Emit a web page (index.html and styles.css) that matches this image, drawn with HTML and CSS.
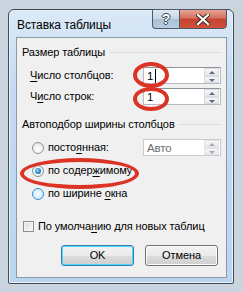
FILE: index.html
```html
<!DOCTYPE html>
<html lang="ru">
<head>
<meta charset="utf-8">
<title>Вставка таблицы</title>
<link rel="stylesheet" href="styles.css">
</head>
<body>
<div class="window">
  <div class="titlebar">
    <span class="title">Вставка таблицы</span>
    <div class="caption-buttons">
      <div class="cap-btn help">?</div>
      <div class="cap-btn close">
        <svg width="14" height="11" viewBox="0 0 14 11"><path d="M2 1 L12 10 M12 1 L2 10" stroke="#3a2020" stroke-width="4" stroke-linecap="square"/><path d="M2 1 L12 10 M12 1 L2 10" stroke="#fff" stroke-width="2.2" stroke-linecap="square"/></svg>
      </div>
    </div>
  </div>
  <div class="client">
    <div class="group-title"><span>Размер таблицы</span><i class="rule"></i></div>
    <div class="row row1">
      <span class="lbl"><u>Ч</u>исло столбцов:</span>
      <div class="spin"><span class="val">1<i class="caret"></i></span><div class="arrows"><b class="up"></b><b class="down"></b></div></div>
    </div>
    <div class="row row2">
      <span class="lbl">Ч<u>и</u>сло строк:</span>
      <div class="spin"><span class="val">1</span><div class="arrows"><b class="up"></b><b class="down"></b></div></div>
    </div>
    <div class="group-title g2"><span>Автоподбор ширины столбцов</span><i class="rule"></i></div>
    <div class="opt opt1">
      <span class="radio"></span><span class="otext">посто<u>я</u>нная:</span>
      <div class="spin auto"><span class="val">Авто</span><div class="arrows"><b class="up"></b><b class="down"></b></div></div>
    </div>
    <div class="opt opt2"><span class="radio checked"></span><span class="otext">по содер<u>ж</u>имому</span></div>
    <div class="opt opt3"><span class="radio hover"></span><span class="otext">по ширине <u>о</u>кна</span></div>
    <div class="opt check"><span class="box"></span><span class="otext">По умолча<u>н</u>ию для новых таблиц</span></div>
    <div class="buttons">
      <div class="btn default">OK</div>
      <div class="btn">Отмена</div>
    </div>
    <i class="mark m1"></i>
    <i class="mark m2"></i>
    <i class="mark m3"></i>
  </div>
</div>
</body>
</html>
```
FILE: styles.css
```css
* { box-sizing: border-box; }
html, body { margin: 0; padding: 0; }
body {
  width: 243px; height: 292px; overflow: hidden;
  background: #c9d4de;
  font-family: "Liberation Sans", Arial, sans-serif;
  font-size: 11px;
  line-height: 15px;
  letter-spacing: -0.1px;
  color: #000;
  padding: 9px 9px 0 8px;
}
.window {
  width: 226px; height: 275px;
  border: 1px solid #3f4a55;
  border-radius: 6px 6px 2px 2px;
  background: linear-gradient(180deg, #dbe9f7 0%, #c3daf1 30%, #bcd5ef 100%);
  padding: 0 6px 5px 7px;
  display: flex; flex-direction: column;
  box-shadow: inset 0 0 0 1px #e8f2fb;
}
.titlebar {
  height: 27px; flex: none;
  display: flex; justify-content: space-between; align-items: flex-start;
}
.title { padding: 8px 0 0 1px; line-height: 15px; font-size: 12px; }
.caption-buttons { display: flex; margin-top: -1px; }
.cap-btn {
  height: 20px; border: 1px solid #4c5966;
  display: flex; align-items: center; justify-content: center;
}
.help {
  width: 27px; border-radius: 0 0 0 4px; border-right: none;
  background: linear-gradient(180deg, #dfe9f3 0%, #c6d6e6 50%, #aabfd4 51%, #b8cde0 100%);
  color: #fff; font-weight: bold; font-size: 14px;
  text-shadow: 1px 0 0 #354555, -1px 0 0 #354555, 0 1px 0 #354555, 0 -1px 0 #354555;
}
.close {
  width: 48px; border-radius: 0 0 4px 0;
  background: linear-gradient(180deg, #e7a394 0%, #d5705e 45%, #c44430 50%, #d0503a 100%);
}
.client {
  position: relative;
  flex: 1;
  border: 1px solid #8a99a8;
  background: #f0f0f0;
  padding: 0 5px;
  display: flex; flex-direction: column;
  white-space: nowrap;
}
.group-title { display: flex; align-items: center; height: 16px; margin-top: 6px; flex: none; }
.group-title span { padding-right: 4px; }
.group-title .rule { flex: 1; height: 1px; background: #d5dfe5; margin-top: 1px; }
.group-title.g2 { margin-top: 11px; }
.row { display: flex; align-items: center; justify-content: space-between; padding-left: 8px; height: 17px; flex: none; }
.row1 { margin-top: 7px; }
.row2 { margin-top: 4px; }
u { text-decoration: underline; text-underline-offset: 2px; }
.spin {
  width: 78px; height: 17px;
  border: 1px solid #b7bcc4; border-top-color: #8e949c;
  background: #fff;
  display: flex; align-items: center; justify-content: space-between;
  padding: 0 1px 0 3px;
  font-size: 11.5px;
}
.val { position: relative; line-height: 14px; }
.caret { position: absolute; left: 8px; top: 0; width: 1px; height: 14px; background: #000; }
.arrows { display: flex; flex-direction: column; width: 15px; height: 15px; }
.arrows b {
  flex: 1; display: block; position: relative;
  border: 1px solid #d9dde3;
  background: linear-gradient(180deg, #f6f6f6, #e6e8ec);
}
.arrows b::after {
  content: ""; position: absolute; left: 4px; width: 0; height: 0;
  border-left: 3px solid transparent; border-right: 3px solid transparent;
}
.arrows .up::after { top: 2px; border-bottom: 3px solid #5a6a80; }
.arrows .down::after { top: 2px; border-top: 3px solid #5a6a80; }
.opt { display: flex; align-items: center; height: 17px; padding-left: 10px; flex: none; }
.opt1 { margin-top: 7px; }
.opt2 { margin-top: 6px; }
.opt3 { margin-top: 6px; }
.radio {
  width: 12px; height: 12px; border-radius: 50%;
  border: 1px solid #8d949c;
  background: radial-gradient(circle at 50% 60%, #fff 0%, #f2f2f2 50%, #d4d8dc 100%);
  margin-right: 4px; position: relative; flex: none;
}
.radio.checked::after {
  content: ""; position: absolute; left: 2px; top: 2px; width: 6px; height: 6px; border-radius: 50%;
  background: radial-gradient(circle at 40% 40%, #9fe0ff 0%, #2a8bd1 50%, #0e4a8c 100%);
}
.radio.hover {
  border-color: #3c8ed2;
  background: radial-gradient(circle at 50% 50%, #f4fbff 0%, #d8eefc 60%, #a8d6f6 100%);
}
.spin.auto { margin-left: auto; border-color: #c8ccd2; color: #6d6d6d; }
.spin.auto .arrows b { border-color: #e2e4e8; }
.spin.auto .arrows .up::after { border-bottom-color: #a6acb4; }
.spin.auto .arrows .down::after { border-top-color: #a6acb4; }
.check { padding-left: 1px; margin-top: 16px; }
.box {
  width: 11px; height: 11px; border: 1px solid #8e8f8f;
  background: linear-gradient(135deg, #dcdcdc, #fbfbfb);
  margin-right: 4px; flex: none; box-shadow: inset 0 0 0 1px #f4f4f4;
}
.buttons { display: flex; justify-content: flex-end; gap: 11px; margin-top: 10px; padding-right: 3px; flex: none; }
.btn {
  width: 73px; height: 21px;
  border: 1px solid #707070; border-radius: 3px;
  background: linear-gradient(180deg, #f2f2f2 0%, #ebebeb 50%, #dddddd 51%, #cfcfcf 100%);
  display: flex; align-items: center; justify-content: center;
  box-shadow: inset 0 0 0 1px #fcfcfc;
}
.btn.default { border-color: #3c7fb1; box-shadow: inset 0 0 0 1px #48d8fb; }
.mark { position: absolute; border: 4px solid #dc3327; border-radius: 50%; }
.m1 { left: 116px; top: 24px; width: 36px; height: 26px; }
.m2 { left: 116px; top: 49px; width: 36px; height: 24px; }
.m3 { left: 3px; top: 120px; width: 119px; height: 31px; }
```
